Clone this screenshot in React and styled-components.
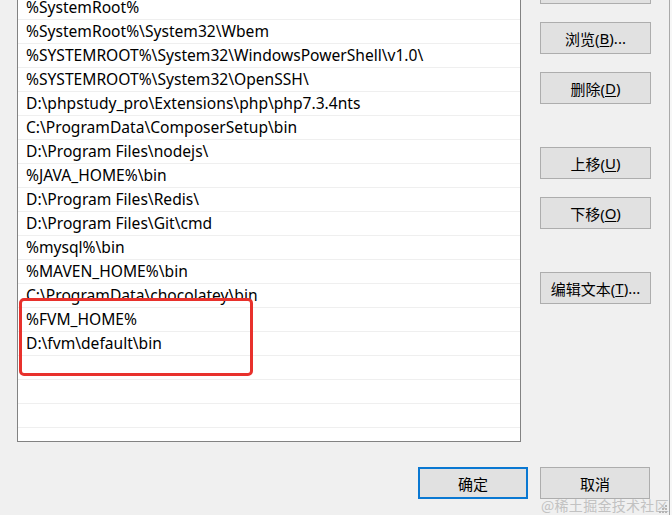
import React from "react";
import styled, { createGlobalStyle } from "styled-components";

const Global = createGlobalStyle`
  html, body { margin: 0; padding: 0; background: #f7f7f7; }
  body { width: 672px; height: 515px; overflow: hidden; }
  #root { width: 672px; height: 515px; }
`;

const Dialog = styled.div`
  position: relative;
  width: 669px;
  height: 515px;
  background: #f0f0f0;
  border-right: 1px solid #a9a9a9;
  overflow: hidden;
  font-family: "Noto Sans", "Noto Sans CJK SC", sans-serif;
  color: #000;
  display: flex;
  flex-direction: column;
`;

const Main = styled.div`
  display: flex;
  align-items: flex-start;
  margin-top: -28px;
`;

const ListBox = styled.div`
  position: relative;
  margin-top: 23px;
  margin-left: 17px;
  width: 502px;
  height: 445px;
  background: #fff;
  border: 1px solid #828282;
  overflow: hidden;
`;

const Row = styled.div`
  height: 23px;
  border-bottom: 1px solid #efefef;
  padding-left: 8px;
  font-size: 15.6px;
  line-height: 23px;
  white-space: nowrap;
`;

const Highlight = styled.div`
  position: absolute;
  left: 1px;
  top: 302px;
  width: 228px;
  height: 72px;
  border: 3px solid #e8312c;
  border-radius: 5px;
  pointer-events: none;
`;

const Side = styled.div`
  display: flex;
  flex-direction: column;
  margin-left: 19px;
`;

const Group = styled.div`
  display: flex;
  flex-direction: column;
  gap: 18px;
  margin-top: ${(p) => p.$gap || 0}px;
`;

const Button = styled.button`
  box-sizing: border-box;
  width: ${(p) => p.$w || 111}px;
  height: 32px;
  padding: 0;
  background: #e1e1e1;
  border: ${(p) => (p.$default ? "2px solid #0a78d2" : "1px solid #adadad")};
  font-family: "Noto Sans", "Noto Sans CJK SC", sans-serif;
  font-size: 15px;
  color: #000;
  display: flex;
  align-items: center;
  justify-content: center;
  letter-spacing: 0;
`;

const Key = styled.span`
  text-decoration: underline;
  text-underline-offset: 2px;
`;

const Footer = styled.div`
  display: flex;
  gap: 12px;
  margin-top: 25px;
  margin-left: 418px;
`;

const Watermark = styled.div`
  position: absolute;
  left: 541px;
  top: 495px;
  font-family: "Noto Sans CJK SC", sans-serif;
  font-size: 14px;
  color: #c2c2c2;
  letter-spacing: 0.3px;
  white-space: nowrap;
`;

const Grip = styled.svg`
  position: absolute;
  right: 2px;
  bottom: 2px;
`;

const paths = [
  "%SystemRoot%",
  "%SystemRoot%\\System32\\Wbem",
  "%SYSTEMROOT%\\System32\\WindowsPowerShell\\v1.0\\",
  "%SYSTEMROOT%\\System32\\OpenSSH\\",
  "D:\\phpstudy_pro\\Extensions\\php\\php7.3.4nts",
  "C:\\ProgramData\\ComposerSetup\\bin",
  "D:\\Program Files\\nodejs\\",
  "%JAVA_HOME%\\bin",
  "D:\\Program Files\\Redis\\",
  "D:\\Program Files\\Git\\cmd",
  "%mysql%\\bin",
  "%MAVEN_HOME%\\bin",
  "C:\\ProgramData\\chocolatey\\bin",
  "%FVM_HOME%",
  "D:\\fvm\\default\\bin",
  "",
  "",
  "",
  "",
];

export default function App() {
  return (
    <>
      <Global />
      <Dialog>
        <Main>
          <ListBox>
            {paths.map((p, i) => (
              <Row key={i}>{p}</Row>
            ))}
            <Highlight />
          </ListBox>
          <Side>
            <Group>
              <Button aria-label="编辑" />
              <Button>浏览(<Key>B</Key>)...</Button>
              <Button>删除(<Key>D</Key>)</Button>
            </Group>
            <Group $gap={43}>
              <Button>上移(<Key>U</Key>)</Button>
              <Button>下移(<Key>O</Key>)</Button>
            </Group>
            <Group $gap={43}>
              <Button>编辑文本(<Key>T</Key>)...</Button>
            </Group>
          </Side>
        </Main>
        <Footer>
          <Button $default $w={110}>确定</Button>
          <Button $w={110}>取消</Button>
        </Footer>
        <Watermark>@稀土掘金技术社区</Watermark>
        <Grip width="8" height="8" viewBox="0 0 8 8">
          <rect x="6" y="0" width="2" height="2" fill="#b5b5b5" />
          <rect x="3" y="3" width="2" height="2" fill="#b5b5b5" />
          <rect x="6" y="3" width="2" height="2" fill="#b5b5b5" />
          <rect x="0" y="6" width="2" height="2" fill="#b5b5b5" />
          <rect x="3" y="6" width="2" height="2" fill="#b5b5b5" />
          <rect x="6" y="6" width="2" height="2" fill="#b5b5b5" />
        </Grip>
      </Dialog>
    </>
  );
}
